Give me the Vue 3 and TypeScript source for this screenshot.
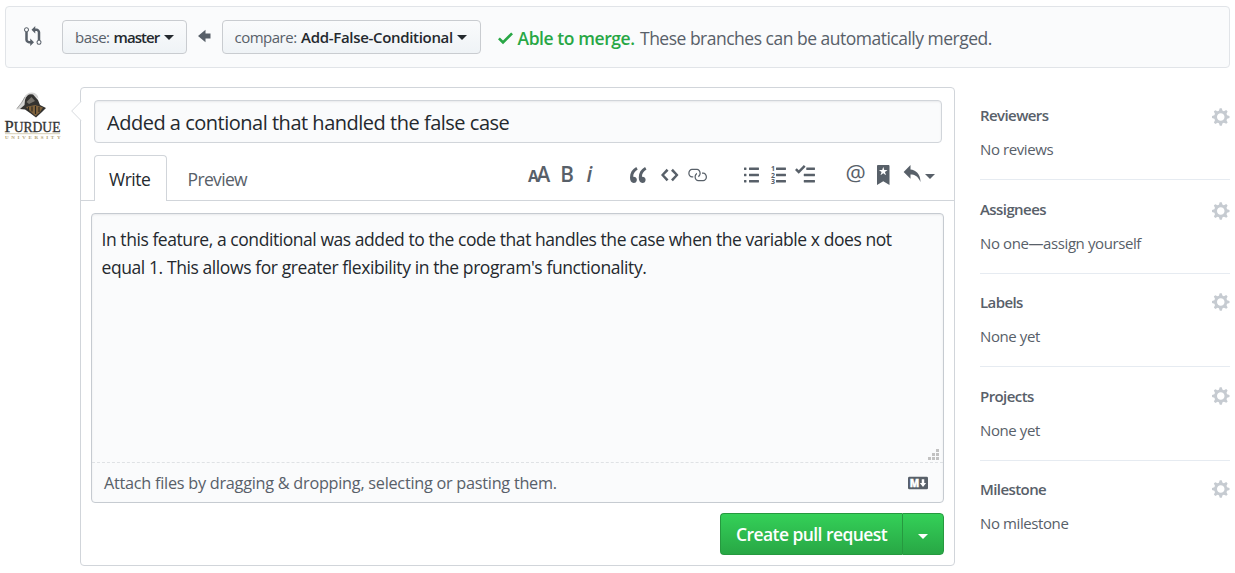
<script setup lang="ts">
interface ToolIcon {
  name: string
  width: number
  path?: string
}

interface SidebarSection {
  title: string
  value: string
}

const compareIcon =
  'M5 12H4c-.27-.02-.48-.11-.69-.31-.21-.2-.3-.42-.31-.69V4.72A1.993 1.993 0 0 0 2 1a1.993 1.993 0 0 0-1 3.72V11c.03.78.34 1.47.94 2.06.6.59 1.28.91 2.06.94h1v2l3-3-3-3v2zM2 1.8c.66 0 1.2.55 1.2 1.2 0 .65-.55 1.2-1.2 1.2C1.35 4.2.8 3.65.8 3c0-.65.55-1.2 1.2-1.2zm11 9.48V5c-.03-.78-.34-1.47-.94-2.06-.6-.59-1.28-.91-2.06-.94H9V0L6 3l3 3V4h1c.27.02.48.11.69.31.21.2.3.42.31.69v6.28A1.993 1.993 0 0 0 12 15a1.993 1.993 0 0 0 1-3.72zm-1 2.92c-.66 0-1.2-.55-1.2-1.2 0-.65.55-1.2 1.2-1.2.65 0 1.2.55 1.2 1.2 0 .65-.55 1.2-1.2 1.2z'
const gearIcon =
  'M14 8.77v-1.6l-1.94-.64-.45-1.09.88-1.84-1.13-1.13-1.81.91-1.09-.45-.69-1.92h-1.6l-.63 1.94-1.11.45-1.84-.88-1.13 1.13.91 1.81-.45 1.09L0 7.23v1.59l1.94.64.45 1.09-.88 1.84 1.13 1.13 1.81-.91 1.09.45.69 1.92h1.59l.63-1.94 1.11-.45 1.84.88 1.13-1.13-.92-1.81.47-1.09L14 8.75v.02zM7 11c-1.66 0-3-1.34-3-3s1.34-3 3-3 3 1.34 3 3-1.34 3-3 3z'

const toolGroups: ToolIcon[][] = [
  [
    { name: 'heading', width: 18 },
    { name: 'bold', width: 10 },
    { name: 'italic', width: 6 },
  ],
  [
    {
      name: 'quote',
      width: 14,
      path: 'M6.16 3.5C3.73 5.06 2.55 6.67 2.55 9.36c.16-.05.3-.05.44-.05 1.27 0 2.5.86 2.5 2.41 0 1.61-1.03 2.61-2.5 2.61-1.9 0-2.99-1.52-2.99-4.25 0-3.8 1.75-6.53 5.02-8.42L6.16 3.5zm7 0c-2.43 1.56-3.61 3.17-3.61 5.86.16-.05.3-.05.44-.05 1.27 0 2.5.86 2.5 2.41 0 1.61-1.03 2.61-2.5 2.61-1.89 0-2.98-1.52-2.98-4.25 0-3.8 1.75-6.53 5.02-8.42l1.14 1.84h-.01z',
    },
    {
      name: 'code',
      width: 14,
      path: 'M9.5 3L8 4.5 11.5 8 8 11.5 9.5 13 14 8 9.5 3zm-5 0L0 8l4.5 5L6 11.5 2.5 8 6 4.5 4.5 3z',
    },
    {
      name: 'link',
      width: 16,
      path: 'M4 9h1v1H4c-1.5 0-3-1.69-3-3.5S2.55 3 4 3h4c1.45 0 3 1.69 3 3.5 0 1.41-.91 2.72-2 3.25V8.59c.58-.45 1-1.27 1-2.09C10 5.22 8.98 4 8 4H4c-.98 0-2 1.22-2 2.5S3 9 4 9zm9-3h-1v1h1c1 0 2 1.22 2 2.5S13.98 12 13 12H9c-.98 0-2-1.22-2-2.5 0-.83.42-1.64 1-2.09V6.25c-1.09.53-2 1.84-2 3.25C6 11.31 7.55 13 9 13h4c1.45 0 3-1.69 3-3.5S14.5 6 13 6z',
    },
  ],
  [
    {
      name: 'bullets',
      width: 12,
      path: 'M2 13c0 .59 0 1-.59 1H.59C0 14 0 13.59 0 13c0-.59 0-1 .59-1h.81c.59 0 .59.41.59 1H2zm2.59-9h6.81c.59 0 .59-.41.59-1 0-.59 0-1-.59-1H4.59C4 2 4 2.41 4 3c0 .59 0 1 .59 1zM1.41 7H.59C0 7 0 7.41 0 8c0 .59 0 1 .59 1h.81c.59 0 .59-.41.59-1 0-.59 0-1-.59-1h.01zm0-5H.59C0 2 0 2.41 0 3c0 .59 0 1 .59 1h.81c.59 0 .59-.41.59-1 0-.59 0-1-.59-1h.01zm10 5H4.59C4 7 4 7.41 4 8c0 .59 0 1 .59 1h6.81c.59 0 .59-.41.59-1 0-.59 0-1-.59-1h.01zm0 5H4.59C4 12 4 12.41 4 13c0 .59 0 1 .59 1h6.81c.59 0 .59-.41.59-1 0-.59 0-1-.59-1h.01z',
    },
    {
      name: 'numbers',
      width: 12,
      path: 'M12 13c0 .59 0 1-.59 1H4.59C4 14 4 13.59 4 13c0-.59 0-1 .59-1h6.81c.59 0 .59.41.59 1H12zM4.59 4h6.81c.59 0 .59-.41.59-1 0-.59 0-1-.59-1H4.59C4 2 4 2.41 4 3c0 .59 0 1 .59 1zm6.81 3H4.59C4 7 4 7.41 4 8c0 .59 0 1 .59 1h6.81c.59 0 .59-.41.59-1 0-.59 0-1-.59-1z',
    },
    {
      name: 'tasks',
      width: 16,
      path: 'M15.41 9H7.59C7 9 7 8.59 7 8c0-.59 0-1 .59-1h7.81c.59 0 .59.41.59 1 0 .59 0 1-.59 1h.01zM9.59 4C9 4 9 3.59 9 3c0-.59 0-1 .59-1h5.81c.59 0 .59.41.59 1 0 .59 0 1-.59 1H9.59zM0 3.91l1.41-1.3L3 4.2 7.09 0 8.5 1.41 3 6.91l-3-3zm7.59 8.09h7.81c.59 0 .59.41.59 1 0 .59 0 1-.59 1H7.59C7 14 7 13.59 7 13c0-.59 0-1 .59-1z',
    },
  ],
  [
    { name: 'mention', width: 14 },
    {
      name: 'bookmark',
      width: 10,
      path: 'M9 0H1C.27 0 0 .27 0 1v15l5-3.09L10 16V1c0-.73-.27-1-1-1zm-.78 4.25L6.36 5.61l.72 2.16c.06.22-.02.28-.2.17L5 6.6 3.12 7.94c-.19.11-.25.05-.2-.17l.72-2.16-1.86-1.36c-.17-.16-.14-.23.09-.23l2.3-.03.7-2.16h.25l.7 2.16 2.3.03c.23 0 .27.08.09.23h.01z',
    },
    {
      name: 'reply',
      width: 14,
      path: 'M6 3.5c3.92.44 8 3.125 8 10-2.312-5.062-4.75-6-8-6V11L.5 5.5 6 0v3.5z',
    },
  ],
]

const sections: SidebarSection[] = [
  { title: 'Reviewers', value: 'No reviews' },
  { title: 'Assignees', value: 'No one—assign yourself' },
  { title: 'Labels', value: 'None yet' },
  { title: 'Projects', value: 'None yet' },
  { title: 'Milestone', value: 'No milestone' },
]
</script>

<template>
  <div class="page">
    <header class="range">
      <svg class="range-icon" width="17.5" height="20" viewBox="0 0 14 16"><path :d="compareIcon" /></svg>
      <button class="branch base">
        <span class="branch-key">base:</span><span class="branch-name">master</span><i class="caret"></i>
      </button>
      <svg class="range-arrow" width="12.5" height="20" viewBox="0 0 10 16"><path d="M6 3L0 8l6 5v-3h4V6H6z" /></svg>
      <button class="branch compare">
        <span class="branch-key">compare:</span><span class="branch-name">Add-False-Conditional</span><i class="caret"></i>
      </button>
      <svg class="range-check" width="15" height="20" viewBox="0 0 12 16"><path d="M12 5l-8 8-4-4 1.5-1.5L4 10l6.5-6.5z" /></svg>
      <strong class="able">Able to merge.</strong>
      <span class="able-note">These branches can be automatically merged.</span>
    </header>

    <div class="columns">
      <svg class="avatar" width="56" height="56" viewBox="0 0 56 56">
        <path d="M11 21.5Q16 17 19 10Q21 4.5 27 4.5Q33 5 33.5 11L29 8Q22 8 20 16L19 21Z" fill="#d4d4d3" />
        <path d="M12 20.5Q17 15 20 9" fill="none" stroke="#8d8d8b" stroke-width="0.8" />
        <path d="M20 12Q22 5 28 6.500L33 12L35 17L41 20L37 24L31 29.500L25 25L20 21.500L15 21L19.500 17Z" fill="#333230" />
        <path d="M21 19L30 17L38 19.500L35 24L30.500 28L26 24Z" fill="#80633d" />
        <path d="M23.500 19v4M27 18.500v5M30.500 18v8M34 19v5" stroke="#2b2824" stroke-width="1.1" />
        <path d="M21.500 14l5-5 3.500 4-6 3z" fill="#77736c" />
        <text class="crest-name" x="-0.5" y="44" textLength="56" lengthAdjust="spacingAndGlyphs">P<tspan font-size="14">URDUE</tspan></text>
        <path d="M0 45.700H55" stroke="#d3c9ad" stroke-width="0.9" />
        <text class="crest-sub" x="0" y="51" textLength="55.5">UNIVERSITY</text>
      </svg>

      <main class="composer">
        <svg class="pointer" width="10" height="20" viewBox="0 0 10 20">
          <path d="M10 0.5L0.7 10L10 19.5" fill="#fff" stroke="#d8dbdf" />
        </svg>
        <div class="title-field"><span>Added a contional that handled the false case</span></div>
        <div class="tabbar">
          <div class="tab active"><span class="tab-write">Write</span></div>
          <div class="tab"><span class="tab-preview">Preview</span></div>
          <div class="tools">
            <div v-for="(group, g) in toolGroups" :key="g" class="tool-group" :class="'group-' + g">
              <svg
                v-for="tool in group"
                :key="tool.name"
                :class="tool.name"
                :width="tool.width * 1.25"
                height="20"
                :viewBox="`0 0 ${tool.width} 16`"
              >
                <path v-if="tool.path" :d="tool.path" />
                <template v-if="tool.name === 'heading'">
                  <text x="0" y="13.800" font-size="13.4" font-weight="700" textLength="8.6" lengthAdjust="spacingAndGlyphs">A</text>
                  <text x="6.9" y="13.800" font-size="16.6" font-weight="600" textLength="10.8" lengthAdjust="spacingAndGlyphs">A</text>
                </template>
                <text v-else-if="tool.name === 'bold'" x="-0.7" y="13.800" font-size="16.6" font-weight="600">B</text>
                <text v-else-if="tool.name === 'italic'" x="0.4" y="13.800" font-size="16.6" font-weight="600" font-style="italic">i</text>
                <text v-else-if="tool.name === 'mention'" x="-0.4" y="12.7" font-size="18" textLength="16.2" lengthAdjust="spacingAndGlyphs">@</text>
                <g v-else-if="tool.name === 'numbers'" font-size="5.6" font-weight="700">
                  <text x="-0.1" y="5">1</text>
                  <text x="-0.1" y="10">2</text>
                  <text x="-0.1" y="15">3</text>
                </g>
              </svg>
              <i v-if="g === 3" class="caret"></i>
            </div>
          </div>
        </div>

        <div class="editor">
          <div class="body-text">
            <p class="line-one">In this feature, a conditional was added to the code that handles the case when the variable x does not</p>
            <p class="line-two">equal 1. This allows for greater flexibility in the program's functionality.</p>
            <svg class="grip" width="12" height="12" viewBox="0 0 12 12">
              <path d="M8 0h3v3H8zM4 4h3v3H4zM8 4h3v3H8zM0 8h3v3H0zM4 8h3v3H4zM8 8h3v3H8z" />
            </svg>
          </div>
          <div class="attach">
            <span>Attach files by dragging &amp; dropping, selecting or pasting them.</span>
            <svg class="markdown" width="20" height="20" viewBox="0 0 16 16">
              <rect y="3" width="16" height="10" rx="1.1" />
              <text x="1.4" y="11" textLength="7.6" lengthAdjust="spacingAndGlyphs">M</text>
              <path d="M11 5h2v3h1.500l-2.500 3.200L9.500 8H11z" fill="#fff" />
            </svg>
          </div>
        </div>

        <div class="actions">
          <button class="create"><span>Create pull request</span></button>
          <button class="create-more"><i class="caret"></i></button>
        </div>
      </main>

      <aside class="sidebar">
        <section v-for="section in sections" :key="section.title">
          <div class="section-head">
            <h3>{{ section.title }}</h3>
            <svg width="17.5" height="20" viewBox="0 0 14 16"><path :d="gearIcon" /></svg>
          </div>
          <p>{{ section.value }}</p>
        </section>
      </aside>
    </div>
  </div>
</template>

<style>
body {
  margin: 0;
  background: #fff;
}
</style>

<style scoped>
* {
  box-sizing: border-box;
}
.page {
  width: 1235px;
  height: 573px;
  padding: 6px 5px 0;
  overflow: hidden;
  font-family: 'Open Sans', 'Noto Sans', sans-serif;
  color: #24292e;
  white-space: nowrap;
}
svg {
  display: block;
  flex: none;
  overflow: visible;
  fill: #586069;
}
button {
  margin: 0;
  font: inherit;
  color: inherit;
}
p,
h3 {
  margin: 0;
}
.caret {
  flex: none;
  width: 0;
  height: 0;
  border: 5px solid transparent;
  border-top-color: currentColor;
  border-bottom: 0;
}
.range {
  display: flex;
  align-items: center;
  height: 62px;
  padding-left: 18px;
  background: #fafbfc;
  border: 1px solid #e1e4e8;
  border-radius: 4px;
}
.range-icon {
  margin-top: -2px;
}
.branch {
  display: flex;
  align-items: center;
  height: 34px;
  padding: 0 12px;
  font-size: 15px;
  background: linear-gradient(#fafbfc, #eff3f6);
  border: 1px solid #c9ccd0;
  border-radius: 4px;
}
.base {
  width: 125px;
  margin-left: 20.5px;
}
.compare {
  width: 259px;
  margin-left: 11px;
}
.branch-key {
  color: #586069;
  letter-spacing: -0.5px;
}
.branch-name {
  margin-left: 4.5px;
  font-weight: 600;
  letter-spacing: -0.32px;
}
.base .branch-name {
  margin-left: 4px;
  letter-spacing: -0.95px;
}
.branch .caret {
  margin: 1px 0 0 auto;
}
.compare .caret {
  margin-right: 1px;
}
.range-arrow {
  margin: -3px 0 0 11px;
}
.range-check {
  margin: 1px 0 0 17px;
  fill: #28a745;
}
.able {
  width: 122.5px;
  margin: 1px 0 0 5px;
  font-size: 17.5px;
  font-weight: 600;
  letter-spacing: -0.42px;
  color: #28a745;
}
.able-note {
  margin-top: 1px;
  font-size: 17.5px;
  letter-spacing: -0.5px;
  color: #586069;
}
.columns {
  display: flex;
  margin-top: 19px;
}
.avatar {
  margin: 1px 19px 0 0;
}
.crest-name {
  font-family: 'Liberation Serif', serif;
  font-size: 17px;
  fill: #333;
  stroke: #333;
  stroke-width: 0.3;
}
.crest-sub {
  font-family: 'Liberation Serif', serif;
  font-size: 5px;
  font-weight: 700;
  fill: #b5a273;
}
.composer {
  position: relative;
  width: 875px;
  height: 479px;
  border: 1px solid #d1d5da;
  border-radius: 4px;
}
.pointer {
  position: absolute;
  left: -10px;
  top: 13px;
}
.title-field {
  display: flex;
  align-items: center;
  height: 43px;
  margin: 12px 12px 0 13px;
  padding: 2px 0 0 12px;
  font-size: 20px;
  letter-spacing: -0.49px;
  background: #fafbfc;
  border: 1px solid #d1d5da;
  border-radius: 4px;
  box-shadow: inset 0 1px 2px rgba(27, 31, 35, 0.075);
}
.tabbar {
  display: flex;
  height: 46px;
  margin-top: 12px;
  padding-left: 13px;
  border-bottom: 1px solid #d1d5da;
}
.tab {
  display: flex;
  align-items: center;
  height: 46px;
  padding: 1px 0 0 20.5px;
  font-size: 17.5px;
  letter-spacing: -0.65px;
  color: #586069;
}
.tab.active {
  width: 73px;
  padding-left: 14px;
  letter-spacing: -0.5px;
  color: #24292e;
  background: #fff;
  border: 1px solid #d1d5da;
  border-bottom: 0;
  border-radius: 4px 4px 0 0;
}
.tools {
  display: flex;
  margin: 10px 14.5px 0 auto;
}
.tool-group {
  display: flex;
}
.group-0 {
  width: 102px;
  gap: 10px;
}
.group-0 .italic {
  margin-left: 2.5px;
}
.group-1 {
  width: 113.5px;
  gap: 13.5px;
}
.group-1 .link {
  margin-left: -5px;
}
.group-2 {
  width: 102.5px;
  gap: 12px;
}
.group-2 .tasks {
  margin-left: -3px;
}
.group-3 {
  width: 93.5px;
  gap: 12px;
}
.group-3 .bookmark {
  margin-left: 1px;
}
.group-3 .reply {
  margin-left: 1.5px;
}
.group-3 .caret {
  margin: 9px 0 0 -7px;
  color: #586069;
}
.editor {
  width: 853px;
  height: 290px;
  margin: 12px 0 0 10px;
  background: #fafbfc;
  border: 1px solid #c6cbd1;
  border-radius: 4px;
  box-shadow: inset 0 1px 2px rgba(27, 31, 35, 0.075);
}
.body-text {
  position: relative;
  height: 248px;
  padding: 11px 0 0 9.5px;
  font-size: 17.5px;
  line-height: 28px;
}
.line-one {
  letter-spacing: -0.44px;
}
.line-two {
  letter-spacing: -0.41px;
}
.grip {
  position: absolute;
  right: 3px;
  bottom: 1px;
  fill: #c2c2c2;
}
.attach {
  display: flex;
  align-items: center;
  justify-content: space-between;
  height: 40px;
  padding: 1px 15px 0 12px;
  font-size: 16.25px;
  letter-spacing: -0.26px;
  color: #586069;
  border-top: 1px dashed #dfe2e5;
}
.markdown text {
  font-size: 8.6px;
  font-weight: 800;
  letter-spacing: 0;
  fill: #fff;
  stroke: #fff;
  stroke-width: 0.3;
}
.actions {
  display: flex;
  justify-content: flex-end;
  margin: 10px 10px 0 0;
  color: #fff;
}
.create,
.create-more {
  display: flex;
  align-items: center;
  height: 42px;
  padding: 0 0 0 15px;
  font-size: 17.5px;
  font-weight: 600;
  letter-spacing: -0.57px;
  background: linear-gradient(#34d058, #28a745);
  border: 1px solid #26993f;
}
.create {
  width: 182px;
  border-right: 0;
  border-radius: 4px 0 0 4px;
}
.create-more {
  width: 42px;
  border-radius: 0 4px 4px 0;
}
.create-more .caret {
  margin-top: 4px;
}
.sidebar {
  width: 250px;
  margin-left: 25px;
  font-size: 15px;
  color: #586069;
}
.sidebar section {
  height: 94px;
  padding-top: 18px;
  border-bottom: 1px solid #e6ebf1;
}
.sidebar section:nth-child(odd) {
  height: 93px;
  padding-top: 17px;
}
.sidebar section:last-child {
  border-bottom: 0;
}
.section-head {
  display: flex;
  justify-content: space-between;
  height: 34px;
}
.section-head svg {
  margin: 1px 1px 0 0;
  fill: #c6cbd1;
}
.sidebar section:nth-child(-n + 2) svg {
  margin-top: 3px;
}
.section-head h3 {
  font-size: 15px;
  line-height: 22px;
  font-weight: 600;
  letter-spacing: -0.58px;
}
.sidebar p {
  line-height: 22px;
  letter-spacing: -0.4px;
}
</style>
